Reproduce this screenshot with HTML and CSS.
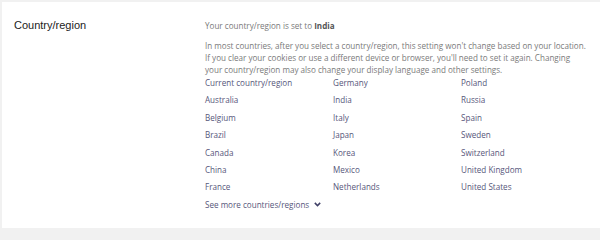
FILE: index.html
```html
<!DOCTYPE html>
<html>
<head>
<meta charset="utf-8">
<link rel="stylesheet" href="styles.css">
</head>
<body>
<div class="card">
  <div class="label">Country/region</div>
  <div class="content">
    <p class="current">Your country/region is set to <b>India</b></p>
    <p class="info">In most countries, after you select a country/region, this setting won't change based on your location. If you clear your cookies or use a different device or browser, you'll need to set it again. Changing your country/region may also change your display language and other settings.</p>
    <div class="grid">
      <a>Current country/region</a><a>Germany</a><a>Poland</a>
      <a>Australia</a><a>India</a><a>Russia</a>
      <a>Belgium</a><a>Italy</a><a>Spain</a>
      <a>Brazil</a><a>Japan</a><a>Sweden</a>
      <a>Canada</a><a>Korea</a><a>Switzerland</a>
      <a>China</a><a>Mexico</a><a>United Kingdom</a>
      <a>France</a><a>Netherlands</a><a>United States</a>
    </div>
    <a class="more">See more countries/regions <svg class="chev" width="7" height="5" viewBox="0 0 7 5"><path d="M0.8 0.9 L3.5 3.6 L6.2 0.9" fill="none" stroke="#3f3f66" stroke-width="1.5"/></svg></a>
  </div>
</div>
</body>
</html>
```
FILE: styles.css
```css
html, body { margin: 0; padding: 0; }
body {
  background: #f1f1f1;
  width: 600px;
  height: 234px;
  overflow: hidden;
}
.card {
  margin: 2px 0 0 2px;
  height: 226px;
  background: #fff;
  display: grid;
  grid-template-columns: 191px 1fr;
  padding: 0 0 0 12px;
  box-sizing: border-box;
}
.label {
  font-family: "Liberation Sans", Arial, sans-serif;
  font-size: 11px;
  color: #222;
  padding-top: 17px;
}
.content {
  font-family: "Open Sans", sans-serif;
  font-size: 8.1px;
  color: #7a7a7a;
  padding-top: 18px;
  width: 383px;
}
.current { margin: 0 0 8px; line-height: 12px; }
.current b { color: #555; font-weight: 700; }
.info { margin: 0; line-height: 12px; }
.grid {
  display: grid;
  grid-template-columns: 128px 128px 128px;
  grid-auto-rows: 17.4px;
  margin-top: -2px;
}
.grid a, .more {
  color: #56567a;
  line-height: 17.4px;
  text-decoration: none;
}
.more {
  display: inline-flex;
  align-items: center;
  gap: 5px;
}
.chev { display: block; }
```
